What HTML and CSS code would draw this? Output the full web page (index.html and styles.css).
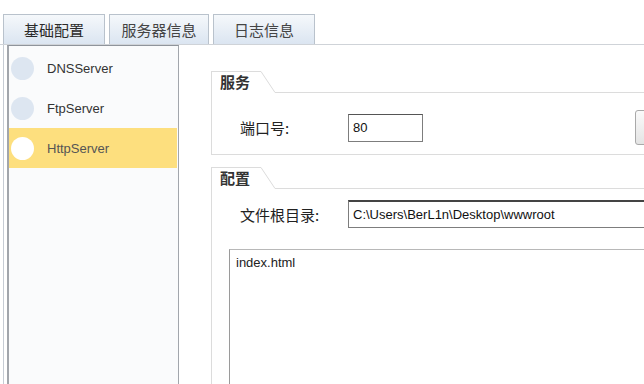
FILE: index.html
```html
<!DOCTYPE html>
<html lang="zh-CN">
<head>
	<meta charset="utf-8">
	<title>服务器信息</title>
	<link rel="stylesheet" href="styles.css">
</head>
<body>
	<div class="tabBar">
		<div class="tab tabFirst">基础配置</div>
		<div class="tab tabMid">服务器信息</div>
		<div class="tab">日志信息</div>
	</div>
	<div class="tabBody">
		<ul class="serverList">
			<li class="serverItem"><span class="dot"></span>DNSServer</li>
			<li class="serverItem"><span class="dot"></span>FtpServer</li>
			<li class="serverItem on"><span class="dot"></span>HttpServer</li>
		</ul>
		<div class="detail">
			<div class="group">
				<div class="groupHead">
					<span class="groupTitle">服务</span>
					<svg class="groupSlant" width="14" height="22" viewBox="0 0 14 22"><path d="M0 0.5 L14 21.5" stroke="#dcdcdc" stroke-width="1" fill="none"/></svg>
					<span class="groupLine"></span>
				</div>
				<div class="groupBody groupBodyService">
					<div class="formRow">
						<label class="formLabel">端口号:</label>
						<input type="text" class="ipt iptPort" value="80">
						<button type="button" class="btnSave"></button>
					</div>
				</div>
			</div>
			<div class="group groupConfig">
				<div class="groupHead">
					<span class="groupTitle">配置</span>
					<svg class="groupSlant" width="14" height="22" viewBox="0 0 14 22"><path d="M0 0.5 L14 21.5" stroke="#dcdcdc" stroke-width="1" fill="none"/></svg>
					<span class="groupLine"></span>
				</div>
				<div class="groupBody groupBodyConfig">
					<div class="formRow">
						<label class="formLabel">文件根目录:</label>
						<input type="text" class="ipt iptPath" value="C:\Users\BerL1n\Desktop\wwwroot">
					</div>
					<textarea class="fileList">index.html</textarea>
				</div>
			</div>
		</div>
	</div>
</body>
</html>
```

FILE: styles.css
```css
* {margin:0; padding:0; box-sizing:border-box;}
body {width:644px; height:384px; overflow:hidden; font-family:"Liberation Sans", "Noto Sans CJK SC", sans-serif; font-size:13px; color:#222; background:#fff;}

.tabBar {display:flex; padding:14px 0 0 3px; height:45px; border-bottom:1px solid #cfd3d8;}
.tab {width:102px; height:30px; margin-right:4px; line-height:29px; text-align:center; font-family:"Noto Sans CJK SC", sans-serif; font-size:15px; color:#444; border:1px solid #b9c2cc; border-bottom:none; background:linear-gradient(#f5f8fb, #dbe5f1);}
.tab.tabFirst {color:#2a2a2a;}
.tab.tabMid {width:100px;}

.tabBody {display:flex; margin-left:3px; height:360px; border-left:1px solid #c6ccd4;}

.serverList {list-style:none; flex:none; margin:0 0 0 3px; padding-top:2px; width:172px; border:1px solid #a2a6ac; border-left:2px solid #a2a6ac; border-top-color:#8f949b; background:#fafbfc;}
.serverItem {display:flex; align-items:center; margin-right:1px; height:40px; padding-left:2px; color:#333;}
.serverItem .dot {width:23px; height:23px; margin-right:13px; border-radius:50%; background:#dde6f1;}
.serverItem.on {color:#555; background:#fddf7e;}
.serverItem.on .dot {background:#fff;}

.detail {flex:none; margin-left:32px; padding-top:26px;}
.group {width:470px;}
.groupConfig {margin-top:12px;}
.groupHead {display:flex; height:22px;}
.groupTitle {width:50px; padding-left:8px; line-height:20px; font-family:"Noto Sans CJK SC", sans-serif; font-size:15px; font-weight:bold; color:#333; border-top:1px solid #dcdcdc; border-left:1px solid #dcdcdc;}
.groupSlant {display:block; flex:none;}
.groupLine {flex:1; border-bottom:1px solid #dcdcdc;}
.groupBody {border:1px solid #dcdcdc; border-top:none;}
.groupBodyService {height:62px; padding-top:17px;}
.groupBodyConfig {height:240px; padding-top:11px;}

.formRow {display:flex; align-items:center; padding-left:28px;}
.formLabel {flex:none; width:108px; font-family:"Noto Sans CJK SC", sans-serif; font-size:15px; color:#222;}
.ipt {flex:none; height:28px; padding:0 4px; font-family:"Liberation Sans", sans-serif; font-size:13px; color:#111; border:1px solid #7d7d7d; border-top-color:#555; background:#fff;}
.iptPort {width:75px;}
.iptPath {width:300px; border-top:2px solid #444;}
.btnSave {flex:none; margin-left:212px; width:60px; height:35px; border:1px solid #a9a9a9; border-radius:3px; background:linear-gradient(#fafafa, #e4e4e4);}

.fileList {display:block; margin:21px 0 0 17px; width:440px; height:150px; padding:5px 6px; font-family:"Liberation Sans", sans-serif; font-size:13px; color:#222; border:1px solid #b8b8b8; border-left-color:#9a9a9a; resize:none; outline:none;}
```
